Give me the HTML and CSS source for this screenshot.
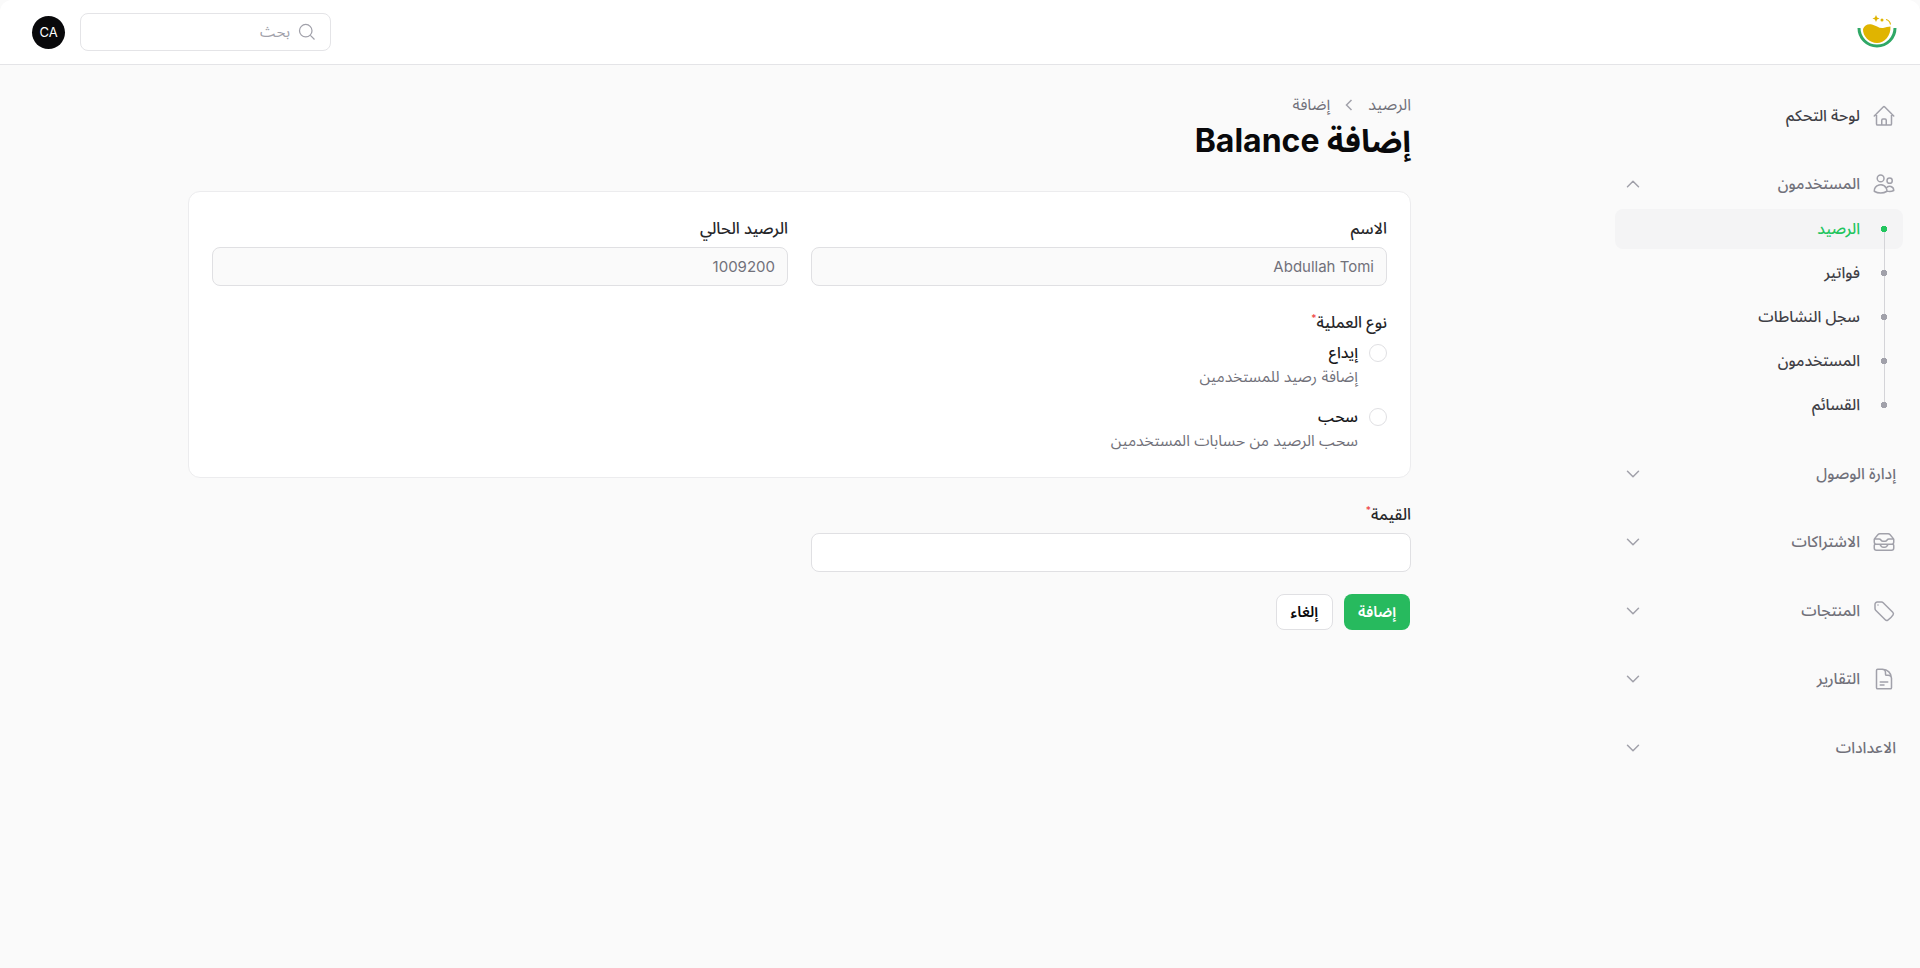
FILE: index.html
```html
<!DOCTYPE html>
<html lang="ar" dir="rtl">
<head>
    <meta charset="utf-8">
    <title>إضافة Balance</title>
    <link rel="stylesheet" href="styles.css">
</head>
<body>
    <header class="topbar">
        <svg class="logo" viewBox="0 0 40 34" aria-hidden="true">
            <path d="M2 13A18 18 0 0 0 38 13" fill="none" stroke="#2fa866" stroke-width="3"/>
            <path d="M6 14C7.500 10 11 8.500 15 9.500c4 1 7 4 11 3.500 3-.5 5-1.500 7.500-1.500.5 9-6 16.500-13.500 16.500S5.500 21 6 14z" fill="#e0b400"/>
            <path d="M19 0l1.100 2.400 2.400 1.100-2.400 1.100-1.100 2.400-1.100-2.400-2.400-1.100 2.400-1.100z" fill="#e0b400"/>
            <circle cx="25" cy="5" r="1.500" fill="#e0b400"/>
            <path d="M29 4.500c2 .5 4 2 4.500 5" stroke="#e0b400" stroke-width="1.200" fill="none"/>
        </svg>
        <div class="topbar-end">
            <label class="search">
                <svg class="search-icon" viewBox="0 0 24 24"><path d="m21 21-5.197-5.197m0 0A7.5 7.5 0 1 0 5.196 5.196a7.5 7.500 0 0 0 10.607 10.607Z"/></svg>
                <span>بحث</span>
            </label>
            <div class="avatar">CA</div>
        </div>
    </header>

    <div class="layout">
        <aside class="sidebar">
            <ul class="nav">
                <li class="group">
                    <a class="nav-item nav-dark">
                        <svg class="nav-icon" viewBox="0 0 24 24"><path d="m2.25 12 8.954-8.955c.44-.439 1.152-.439 1.591 0L21.750 12M4.500 9.750v10.125c0 .621.504 1.125 1.125 1.125H9.750v-4.875c0-.621.504-1.125 1.125-1.125h2.250c.621 0 1.125.504 1.125 1.125V21h4.125c.621 0 1.125-.504 1.125-1.125V9.750M8.250 21h8.250"/></svg>
                        <span class="nav-label">لوحة التحكم</span>
                    </a>
                </li>
                <li class="group">
                    <a class="nav-item">
                        <svg class="nav-icon" viewBox="0 0 24 24"><path d="M15 19.128a9.380 9.380 0 0 0 2.625.372 9.337 9.337 0 0 0 4.121-.952 4.125 4.125 0 0 0-7.533-2.493M15 19.128v-.003c0-1.113-.285-2.160-.786-3.070M15 19.128v.106A12.318 12.318 0 0 1 8.624 21c-2.331 0-4.512-.645-6.374-1.766l-.001-.109a6.375 6.375 0 0 1 11.964-3.070M12 6.375a3.375 3.375 0 1 1-6.750 0 3.375 3.375 0 0 1 6.750 0Zm8.250 2.250a2.625 2.625 0 1 1-5.250 0 2.625 2.625 0 0 1 5.250 0Z"/></svg>
                        <span class="nav-label">المستخدمون</span>
                        <svg class="chevron" viewBox="0 0 20 20"><path d="M4.500 12.750 10 7.250l5.500 5.500"/></svg>
                    </a>
                    <ul class="subnav">
                        <li class="sub-item active"><span class="dot"></span>الرصيد</li>
                        <li class="sub-item"><span class="dot"></span>فواتير</li>
                        <li class="sub-item"><span class="dot"></span>سجل النشاطات</li>
                        <li class="sub-item"><span class="dot"></span>المستخدمون</li>
                        <li class="sub-item"><span class="dot"></span>القسائم</li>
                    </ul>
                </li>
                <li class="group">
                    <a class="nav-item">
                        <span class="nav-label">إدارة الوصول</span>
                        <svg class="chevron" viewBox="0 0 20 20"><path d="M4.500 7.250 10 12.750l5.500-5.500"/></svg>
                    </a>
                </li>
                <li class="group">
                    <a class="nav-item">
                        <svg class="nav-icon" viewBox="0 0 24 24"><path d="m7.875 14.250 1.214 1.942a2.250 2.250 0 0 0 1.908 1.058h2.006c.776 0 1.497-.4 1.908-1.058l1.214-1.942M2.410 9h4.636a2.250 2.250 0 0 1 1.872 1.002l.164.246a2.250 2.250 0 0 0 1.872 1.002h2.092a2.250 2.250 0 0 0 1.872-1.002l.164-.246A2.250 2.250 0 0 1 16.954 9h4.636M2.410 9a2.250 2.250 0 0 0-.16.832V12a2.250 2.250 0 0 0 2.250 2.250h15A2.250 2.250 0 0 0 21.750 12V9.832c0-.287-.055-.57-.16-.832M2.410 9a2.250 2.250 0 0 1 .382-.632l3.285-3.832a2.250 2.250 0 0 1 1.708-.786h8.430c.657 0 1.281.287 1.709.786l3.284 3.832c.163.19.291.404.382.632M4.500 20.250h15A2.250 2.250 0 0 0 21.750 18v-2.625c0-.621-.504-1.125-1.125-1.125H3.375c-.621 0-1.125.504-1.125 1.125V18a2.250 2.250 0 0 0 2.250 2.250Z"/></svg>
                        <span class="nav-label">الاشتراكات</span>
                        <svg class="chevron" viewBox="0 0 20 20"><path d="M4.500 7.250 10 12.750l5.500-5.500"/></svg>
                    </a>
                </li>
                <li class="group">
                    <a class="nav-item">
                        <svg class="nav-icon" viewBox="0 0 24 24"><path d="M9.568 3H5.250A2.250 2.250 0 0 0 3 5.250v4.318c0 .597.237 1.170.659 1.591l9.581 9.581c.699.699 1.780.872 2.607.33a18.095 18.095 0 0 0 5.223-5.223c.542-.827.369-1.908-.33-2.607L11.160 3.660A2.250 2.250 0 0 0 9.568 3Z"/><path d="M6 6h.008v.008H6V6Z"/></svg>
                        <span class="nav-label">المنتجات</span>
                        <svg class="chevron" viewBox="0 0 20 20"><path d="M4.500 7.250 10 12.750l5.500-5.500"/></svg>
                    </a>
                </li>
                <li class="group">
                    <a class="nav-item">
                        <svg class="nav-icon" viewBox="0 0 24 24"><path d="M19.500 14.250v-2.625a3.375 3.375 0 0 0-3.375-3.375h-1.500A1.125 1.125 0 0 1 13.500 7.125v-1.500a3.375 3.375 0 0 0-3.375-3.375H8.250m0 12.750h7.500m-7.500 3H12M10.500 2.250H5.625c-.621 0-1.125.504-1.125 1.125v17.250c0 .621.504 1.125 1.125 1.125h12.750c.621 0 1.125-.504 1.125-1.125V11.250a9 9 0 0 0-9-9Z"/></svg>
                        <span class="nav-label">التقارير</span>
                        <svg class="chevron" viewBox="0 0 20 20"><path d="M4.500 7.250 10 12.750l5.500-5.500"/></svg>
                    </a>
                </li>
                <li class="group">
                    <a class="nav-item">
                        <span class="nav-label">الاعدادات</span>
                        <svg class="chevron" viewBox="0 0 20 20"><path d="M4.500 7.250 10 12.750l5.500-5.500"/></svg>
                    </a>
                </li>
            </ul>
        </aside>

        <main class="main">
            <nav class="breadcrumbs">
                <span>الرصيد</span>
                <svg class="crumb-sep" viewBox="0 0 20 20"><path d="M12.500 5l-5 5 5 5"/></svg>
                <span>إضافة</span>
            </nav>
            <h1 class="page-title">إضافة Balance</h1>

            <section class="card">
                <div class="field-row">
                    <div class="field">
                        <div class="field-label">الاسم</div>
                        <div class="input input-disabled">Abdullah Tomi</div>
                    </div>
                    <div class="field">
                        <div class="field-label">الرصيد الحالي</div>
                        <div class="input input-disabled">1009200</div>
                    </div>
                </div>
                <div class="radio-field">
                    <div class="field-label">نوع العملية<sup class="req">*</sup></div>
                    <div class="radio-option">
                        <span class="radio"></span>
                        <div>
                            <div class="radio-title">إيداع</div>
                            <div class="radio-desc">إضافة رصيد للمستخدمين</div>
                        </div>
                    </div>
                    <div class="radio-option">
                        <span class="radio"></span>
                        <div>
                            <div class="radio-title">سحب</div>
                            <div class="radio-desc">سحب الرصيد من حسابات المستخدمين</div>
                        </div>
                    </div>
                </div>
            </section>

            <div class="value-row">
                <div class="field">
                    <div class="field-label">القيمة<sup class="req">*</sup></div>
                    <div class="input"></div>
                </div>
            </div>

            <div class="actions">
                <button type="button" class="btn btn-primary">إضافة</button>
                <button type="button" class="btn btn-light">إلغاء</button>
            </div>
        </main>
    </div>
</body>
</html>
```
FILE: styles.css
```css
* {
    box-sizing: border-box;
}
html, body {
    margin: 0;
    height: 100%;
}
body {
    background-color: #fafafa;
    color: #09090b;
    font-family: Inter, "Noto Sans Arabic", "Noto Sans", "DejaVu Sans", sans-serif;
    font-size: 15px;
    min-height: 968px;
    overflow: hidden;
}
ul {
    list-style: none;
    margin: 0;
    padding: 0;
}

/* topbar */
.topbar {
    display: flex;
    align-items: center;
    justify-content: space-between;
    height: 65px;
    padding: 0 23px 0 32px;
    background-color: #fff;
    border-bottom: 1px solid #e4e4e7;
    border-radius: 12px 12px 0 0;
}
.logo {
    width: 40px;
    height: 34px;
}
.topbar-end {
    display: flex;
    align-items: center;
    gap: 15px;
}
.search {
    display: flex;
    align-items: center;
    gap: 7px;
    width: 251px;
    height: 38px;
    padding: 0 13px;
    background-color: #fff;
    border: 1px solid #e4e4e7;
    border-radius: 8px;
    color: #a1a1aa;
}
.search-icon {
    width: 20px;
    height: 20px;
    fill: none;
    stroke: #a1a1aa;
    stroke-width: 1.500;
}
.avatar {
    display: flex;
    align-items: center;
    justify-content: center;
    width: 33px;
    height: 33px;
    border-radius: 50%;
    background-color: #09090b;
    color: #fff;
    font-size: 13px;
}

/* page */
.layout {
    display: flex;
    align-items: flex-start;
}
.sidebar {
    flex: 0 0 320px;
    padding: 30.500px 17px 0 15px;
    font-size: 15.500px;
}
.main {
    flex: 1;
    padding: 28px 189px 0 188px;
}

/* sidebar */
.nav {
    display: flex;
    flex-direction: column;
    gap: 28.600px;
}
.nav-item {
    display: flex;
    align-items: center;
    gap: 12px;
    height: 40px;
    padding: 0 7px 0 8px;
    color: #71717a;
    font-weight: 500;
}
.nav-dark {
    color: #3f3f46;
}
.nav-icon {
    flex: none;
    width: 24px;
    height: 24px;
    fill: none;
    stroke: #a1a1aa;
    stroke-width: 1.500;
    stroke-linecap: round;
    stroke-linejoin: round;
}
.nav-label {
    flex: 1;
}
.chevron {
    flex: none;
    width: 20px;
    height: 20px;
    fill: none;
    stroke: #a1a1aa;
    stroke-width: 1.500;
    stroke-linecap: round;
    stroke-linejoin: round;
}
.subnav {
    display: flex;
    flex-direction: column;
    gap: 4px;
    margin-top: 5px;
}
.sub-item {
    position: relative;
    display: flex;
    align-items: center;
    gap: 12px;
    height: 40px;
    padding: 0 7px 0 8px;
    border-radius: 8px;
    color: #3f3f46;
    font-weight: 500;
}
.sub-item.active {
    background-color: #f4f4f5;
    color: #22c55e;
}
.dot {
    position: relative;
    z-index: 1;
    flex: none;
    width: 24px;
    height: 6px;
    background: radial-gradient(circle at center, #a1a1aa 3px, transparent 3.500px);
}
.active .dot {
    background: radial-gradient(circle at center, #22c55e 3px, transparent 3.500px);
}
.sub-item:not(:last-child)::after {
    content: "";
    position: absolute;
    right: 18px;
    top: 20px;
    width: 1px;
    height: 44px;
    background-color: #d4d4d8;
}

/* header */
.breadcrumbs {
    display: flex;
    align-items: center;
    gap: 9px;
    height: 24px;
    color: #71717a;
    font-size: 16px;
}
.crumb-sep {
    width: 20px;
    height: 20px;
    fill: none;
    stroke: #a1a1aa;
    stroke-width: 1.500;
}
.page-title {
    margin: 5px 0 0;
    font-size: 32px;
    line-height: 37px;
    font-weight: 700;
    color: #09090b;
}

/* form */
.card {
    margin-top: 32px;
    padding: 23px 23px 24px;
    background-color: #fff;
    border: 1px solid #ececee;
    border-radius: 12px;
}
.field-row {
    display: grid;
    grid-template-columns: 1fr 1fr;
    gap: 23px;
}
.field-label {
    height: 24px;
    line-height: 26px;
    font-size: 16px;
    font-weight: 500;
    color: #27272a;
    margin-bottom: 8px;
}
.req {
    color: #ef4444;
    font-size: 10px;
    line-height: 0;
}
.input {
    height: 39px;
    line-height: 37px;
    padding: 0 12px;
    background-color: #fff;
    border: 1px solid #e0e0e3;
    border-radius: 8px;
}
.input-disabled {
    background-color: #fafafa;
    color: #71717a;
}
.radio-field {
    margin-top: 23px;
}
.radio-option {
    display: flex;
    gap: 11px;
    margin-bottom: 16px;
}
.radio-option:last-child {
    margin-bottom: 0;
}
.radio {
    flex: none;
    width: 18px;
    height: 18px;
    margin-top: 3px;
    background-color: #fff;
    border: 1px solid #e0e0e3;
    border-radius: 50%;
}
.radio-title {
    height: 24px;
    line-height: 24px;
    font-size: 15.500px;
    font-weight: 500;
    color: #18181b;
}
.radio-desc {
    height: 24px;
    line-height: 24px;
    font-size: 15.500px;
    color: #71717a;
}
.value-row {
    display: grid;
    grid-template-columns: 1fr 1fr;
    gap: 22px;
    margin-top: 23px;
}
.actions {
    display: flex;
    gap: 11px;
    margin-top: 22px;
    padding-right: 1px;
}
.btn {
    height: 36px;
    padding: 0 14px;
    border-radius: 8px;
    font-family: inherit;
    font-size: 15px;
    font-weight: 600;
}
.btn-primary {
    background-color: #27ba5e;
    border: 0;
    color: #fff;
}
.btn-light {
    background-color: #fff;
    border: 1px solid #e0e0e3;
    color: #09090b;
}
```
